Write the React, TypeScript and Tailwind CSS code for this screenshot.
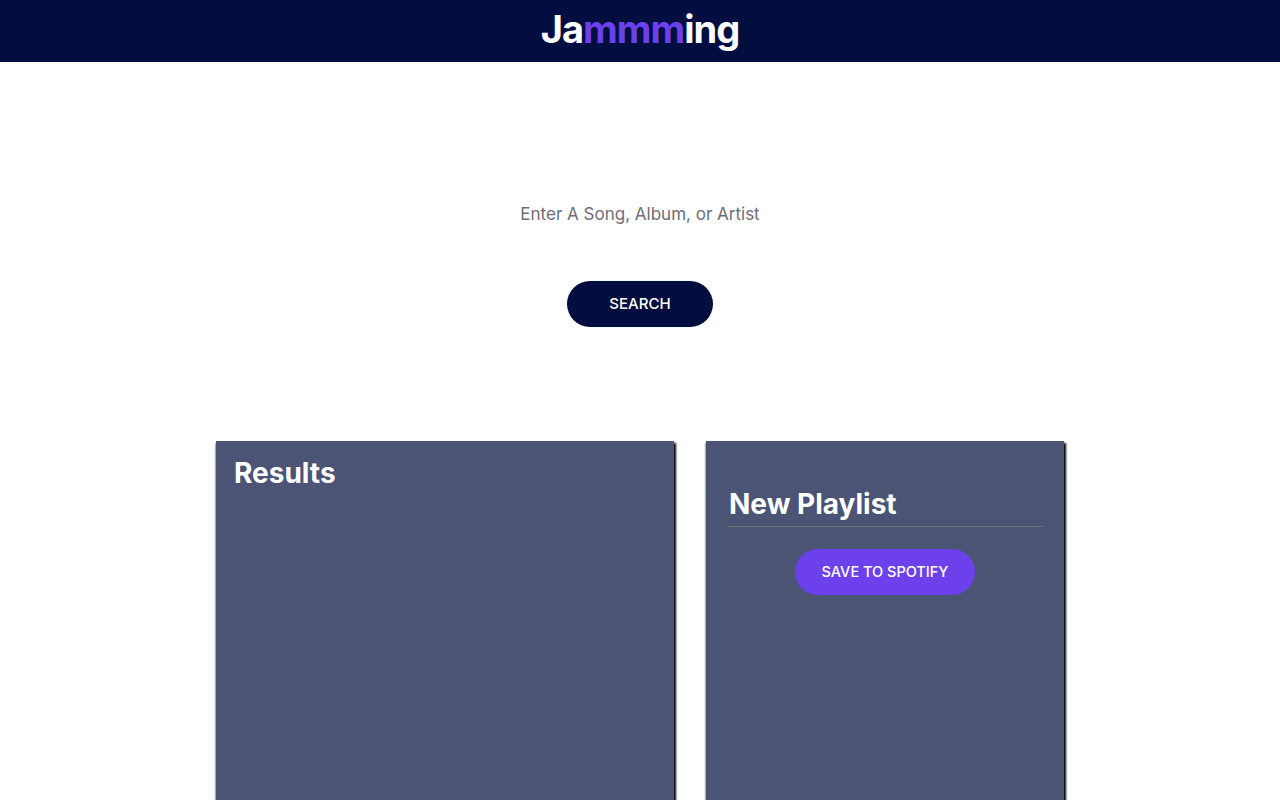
import React, { useState } from 'react';

export default function App() {
  const [term, setTerm] = useState('');

  return (
    <div className="min-h-screen bg-white font-['Inter',sans-serif]">
      <header className="h-[62px] bg-[#010e3f] flex items-center justify-center">
        <h1 className="text-[38px] font-bold text-white tracking-tight leading-none pb-1">
          Ja<span className="text-[#6c41ec]">mmm</span>ing
        </h1>
      </header>

      <section className="flex flex-col items-center pt-[138px]">
        <input
          value={term}
          onChange={e => setTerm(e.target.value)}
          placeholder="Enter A Song, Album, or Artist"
          className="w-[287px] h-[28px] text-center text-[17px] text-gray-700 placeholder:text-[#6e6e78] outline-none"
        />
        <button className="mt-[53px] w-[146px] h-[46px] rounded-full bg-[#010e3f] text-white text-[15px] font-medium">
          SEARCH
        </button>
      </section>

      <main className="flex justify-center gap-8 mt-[114px]">
        <div className="w-[458px] h-[900px] bg-[#4b5475] shadow-[1px_3px_2px_1px_#000] px-[18px] pt-[11px]">
          <h2 className="text-[28px] font-bold text-white">Results</h2>
        </div>
        <div className="w-[358px] h-[900px] bg-[#4b5475] shadow-[1px_3px_2px_1px_#000] px-[21px] pt-[42px] flex flex-col items-center">
          <div className="w-full border-b border-[#6f6f6f] pb-[1px]">
            <h2 className="text-[28px] font-bold text-white pl-[2px]">New Playlist</h2>
          </div>
          <button className="mt-[22px] w-[180px] h-[46px] rounded-full bg-[#6c41ec] text-white text-[14.5px] font-medium">
            SAVE TO SPOTIFY
          </button>
        </div>
      </main>
    </div>
  );
}
